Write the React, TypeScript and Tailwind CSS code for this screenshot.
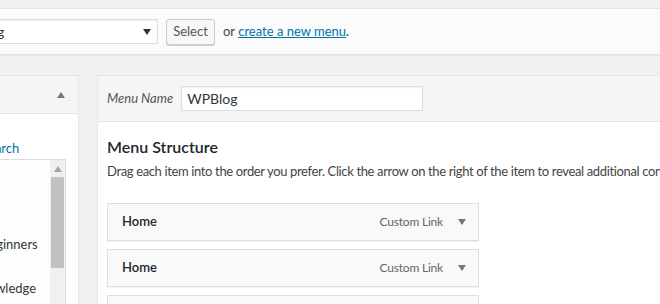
import { ReactNode } from 'react';

const font = "font-['Lato','Noto_Sans',sans-serif]";

function Caret({ up = false, color = '#555' }: { up?: boolean; color?: string }) {
  return (
    <svg width="8" height="6" viewBox="0 0 8 6" className="shrink-0">
      <path d={up ? 'M0 6 L4 0 L8 6 Z' : 'M0 0 L8 0 L4 6 Z'} fill={color} />
    </svg>
  );
}

function MenuItem({ title }: { title: string }) {
  return (
    <div className="mb-2 flex h-[38px] w-[372px] items-center border border-[#dfdfdf] bg-[#f9f9f9] pl-[14px] pr-[12px] shadow-[0_1px_1px_rgba(0,0,0,0.04)]">
      <span className="text-[13px] font-semibold text-[#23282d]">{title}</span>
      <span className="ml-auto mr-[15px] text-[12px] tracking-[-0.2px] text-[#666]">Custom Link</span>
      <Caret color="#72777c" />
    </div>
  );
}

function ListRow({ children, top }: { children: ReactNode; top: string }) {
  return <div className={`whitespace-nowrap text-[13px] text-[#32373c] ${top}`}>{children}</div>;
}

export default function App() {
  return (
    <div className={`h-[304px] w-[660px] overflow-hidden bg-[#f1f1f1] ${font}`}>
      {/* Select menu bar */}
      <div className="mt-[8px] flex h-[47px] items-center border-y border-[#e5e5e5] bg-[#fbfbfb] shadow-[0_1px_1px_rgba(0,0,0,0.04)]">
        <div className="-ml-[55px] flex h-[25px] w-[213px] items-center border border-[#ddd] bg-white pl-[8px] pr-[6px] shadow-[inset_0_1px_2px_rgba(0,0,0,0.07)]">
          <span className="text-[14px] text-[#32373c]">WPBlog</span>
          <span className="ml-auto">
            <Caret color="#333" />
          </span>
        </div>
        <button className="ml-[8px] h-[26px] w-[49px] rounded-[3px] border border-[#ccc] bg-[#f7f7f7] text-[13px] text-[#555] shadow-[0_1px_0_#ccc]">
          Select
        </button>
        <span className="ml-[8px] text-[13px] text-[#444]">
          or{' '}
          <a className="text-[#0073aa] underline">create a new menu</a>.
        </span>
      </div>

      <div className="mt-[20px] flex items-start gap-[18px]">
        {/* Left column: add menu items */}
        <div className="w-[79px] shrink-0 border-r border-t border-[#e5e5e5] bg-white">
          <div className="flex h-[38px] items-center justify-end border-b border-[#e5e5e5] bg-[#f5f5f5] pr-[13px]">
            <Caret up color="#72777c" />
          </div>
          <div className="pt-[25px]">
            <div className="-ml-[19px] text-[13px] leading-[18px] text-[#0073aa]">Search</div>
            <div className="mt-[2px] flex h-[200px] w-[66px] border-r border-t border-[#ddd] bg-[#fdfdfd]">
              <div className="flex-1 overflow-hidden">
                <ListRow top="mt-[75px] -ml-[19px]">Beginners</ListRow>
                <ListRow top="mt-[24px] -ml-[28px]">Knowledge</ListRow>
              </div>
              <div className="flex w-[15px] flex-col items-center bg-[#f0f0f0]">
                <div className="mt-[6px]">
                  <Caret up color="#a3a3a3" />
                </div>
                <div className="mt-[5px] h-[91px] w-[13px] bg-[#c1c1c1]" />
              </div>
            </div>
          </div>
        </div>

        {/* Right column: menu structure */}
        <div className="min-w-0 flex-1 border-l border-t border-[#e5e5e5] bg-white">
          <div className="flex h-[46px] items-center border-b border-[#e5e5e5] bg-[#f5f5f5] pl-[9px]">
            <span className="text-[13px] italic text-[#555]">Menu Name</span>
            <div className="ml-[8px] flex h-[25px] w-[242px] items-center border border-[#ddd] bg-white pl-[5px] shadow-[inset_0_1px_2px_rgba(0,0,0,0.07)]">
              <span className="text-[14px] text-[#32373c]">WPBlog</span>
            </div>
          </div>
          <div className="pl-[9px]">
            <h3 className="mt-[14px] text-[16px] font-semibold leading-[22px] text-[#23282d]">Menu Structure</h3>
            <p className="mt-[4px] whitespace-nowrap text-[13px] leading-[18px] tracking-[-0.36px] text-[#444]">
              Drag each item into the order you prefer. Click the arrow on the right of the item to reveal additional configuration options.
            </p>
            <div className="mt-[23px]">
              <MenuItem title="Home" />
              <MenuItem title="Home" />
              <MenuItem title="About" />
            </div>
          </div>
        </div>
      </div>
    </div>
  );
}
